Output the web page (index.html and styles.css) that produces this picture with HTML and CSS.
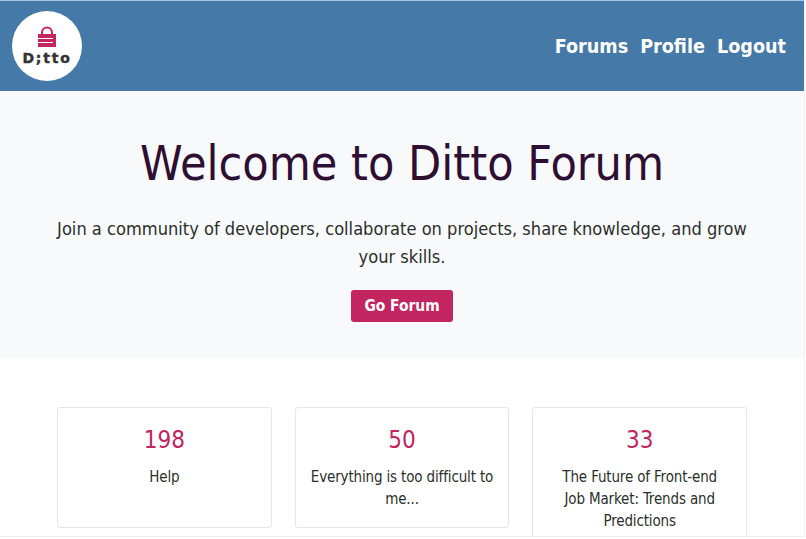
FILE: index.html
```html
<!DOCTYPE html>
<html lang="en">
<head>
    <meta charset="UTF-8">
    <meta name="viewport" content="width=device-width, initial-scale=1.0">
    <title>Ditto Forum</title>
    <link rel="stylesheet" href="styles.css">
</head>
<body>
    <div class="page">
        <header class="navbar">
            <a class="logo" href="#">
                <svg class="logo-lock" width="20" height="22" viewBox="0 0 20 22">
                    <path d="M5 9V6.500a5 5 0 0 1 10 0V9" fill="none" stroke="#c2255f" stroke-width="2"/>
                    <path d="M1 8h18v13H1z" fill="#c2255f"/>
                    <path d="M1 12.500h15M1 16.500h15" stroke="#fff" stroke-width="1.200"/>
                </svg>
                <span class="logo-text">D;tto</span>
            </a>
            <nav class="nav-links">
                <a href="#">Forums</a>
                <a href="#">Profile</a>
                <a href="#">Logout</a>
            </nav>
        </header>

        <section class="hero">
            <h1>Welcome to Ditto Forum</h1>
            <p>Join a community of developers, collaborate on projects, share knowledge, and grow your skills.</p>
            <a class="btn" href="#">Go Forum</a>
        </section>

        <section class="stats">
            <div class="card">
                <h3>198</h3>
                <p>Help</p>
            </div>
            <div class="card">
                <h3>50</h3>
                <p>Everything is too difficult to me...</p>
            </div>
            <div class="card">
                <h3>33</h3>
                <p>The Future of Front-end<br>Job Market: Trends and Predictions</p>
            </div>
        </section>
    </div>
</body>
</html>
```

FILE: styles.css
```css
html, body {
    height: 100%;
    overflow: hidden;
}
body {
    font-family: "DejaVu Sans", sans-serif;
    font-stretch: condensed;
    margin: 0;
    background-color: #fff;
    color: #2b2f2b;
}
.page {
    height: 535px;
    overflow: hidden;
    margin-right: 1px;
    border-top: 1px solid #a9c4dc;
    border-right: 1px solid #f2f2f2;
    border-bottom: 1px solid #eee;
}
.navbar {
    display: flex;
    justify-content: space-between;
    align-items: center;
    height: 90px;
    padding: 0 18px 0 12px;
    background-color: #4479a8;
}
.logo {
    display: flex;
    flex-direction: column;
    align-items: center;
    justify-content: center;
    width: 70px;
    height: 70px;
    border-radius: 50%;
    background-color: #fff;
    text-decoration: none;
}
.logo-lock {
    display: block;
    margin-bottom: 3px;
}
.logo-text {
    font-size: 14px;
    font-weight: bold;
    font-stretch: normal;
    letter-spacing: 1.8px;
    line-height: 15px;
    color: #333;
    -webkit-text-stroke: 0.4px #333;
}
.nav-links {
    display: flex;
    gap: 12px;
}
.nav-links a {
    color: #fff;
    font-size: 19.6px;
    font-weight: bold;
    text-decoration: none;
}
.hero {
    height: 267px;
    box-sizing: border-box;
    padding: 42px 57px 0;
    background-color: #f8f9fa;
    text-align: center;
}
.hero h1 {
    margin: 0 0 22px;
    font-size: 48px;
    font-weight: normal;
    line-height: 60px;
    color: #2f0e33;
}
.hero p {
    margin: 0 0 19px;
    font-size: 18.1px;
    line-height: 28px;
}
.btn {
    display: inline-block;
    padding: 6px 13px;
    color: #fff;
    background-color: #c2255f;
    border-radius: 3px;
    font-size: 15.4px;
    font-weight: bold;
    line-height: 20px;
    text-decoration: none;
}
.stats {
    display: flex;
    align-items: flex-start;
    gap: 23px;
    padding: 49px 57px 0;
}
.card {
    flex: 1;
    padding: 17px 14px 16px;
    min-height: 121px;
    box-sizing: border-box;
    border: 1px solid #e6e6e6;
    border-radius: 3px;
    text-align: center;
}
.card h3 {
    margin: 0 0 11px;
    font-size: 24px;
    font-weight: normal;
    line-height: 30px;
    color: #c2255f;
}
.card p {
    margin: 0;
    font-size: 15px;
    letter-spacing: -0.15px;
    line-height: 22px;
}
```
